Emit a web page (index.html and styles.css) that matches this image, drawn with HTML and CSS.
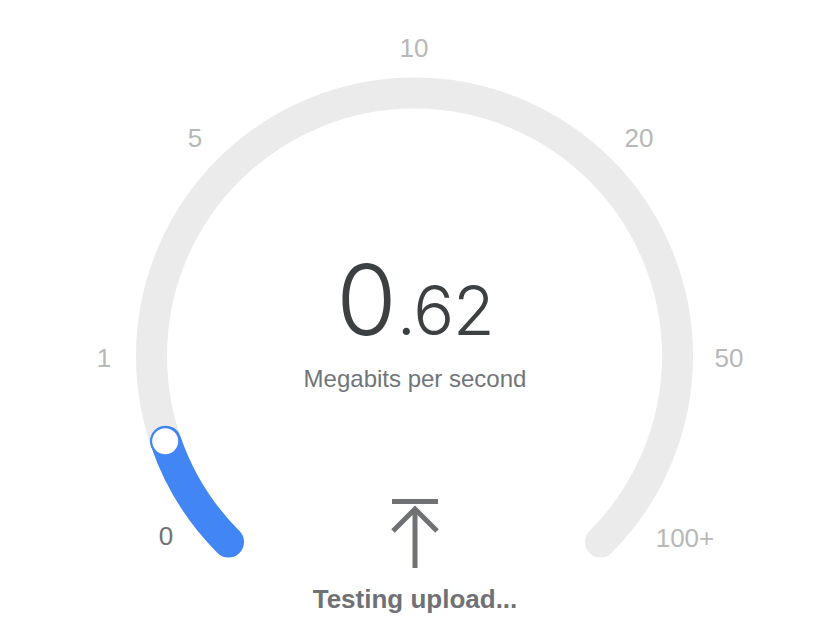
FILE: index.html
```html
<!DOCTYPE html>
<html lang="en">
<head>
    <meta charset="UTF-8">
    <meta name="viewport" content="width=device-width, initial-scale=1.0">
    <title>Speed Test</title>
    <link rel="stylesheet" href="styles.css">
</head>
<body>
    <main class="meter">
        <!-- dial: track, progress, knob and scale labels -->
        <svg class="dial" width="828" height="627" viewBox="0 0 828 627">
            <path class="track" d="M 228.5 542 A 263 263 0 1 1 600.5 542"/>
            <path class="progress" d="M 228.5 542 A 263 263 0 0 1 165.7 441.2"/>
            <circle class="knob" cx="165.2" cy="441.2" r="14"/>
            <text class="tick active" x="166" y="545">0</text>
            <text class="tick" x="104" y="367">1</text>
            <text class="tick" x="195" y="147">5</text>
            <text class="tick" x="414" y="57">10</text>
            <text class="tick" x="639" y="147">20</text>
            <text class="tick" x="729" y="367">50</text>
            <text class="tick" x="685" y="547">100+</text>
        </svg>

        <div class="overlay">
            <div class="speed"><span class="whole">0</span><span class="decimals">.62</span></div>
            <div class="unit">Megabits per second</div>

            <div class="status">
                <svg class="upload-icon" width="50" height="74" viewBox="0 0 50 74">
                    <rect x="2" y="2" width="46" height="5" fill="#6f7175"/>
                    <polyline points="3,34 25,12 47,34" fill="none" stroke="#6f7175" stroke-width="5"/>
                    <line x1="25" y1="13" x2="25" y2="71" stroke="#6f7175" stroke-width="5"/>
                </svg>
                <div class="status-text">Testing upload...</div>
            </div>
        </div>
    </main>
</body>
</html>
```

FILE: styles.css
```css
body {
    margin: 0;
    background-color: white;
    font-family: "Liberation Sans", Arial, sans-serif;
}
.meter {
    display: grid;
    width: 828px;
    height: 627px;
}
.dial,
.overlay {
    grid-area: 1 / 1;
}
.track {
    fill: none;
    stroke: #ebebeb;
    stroke-width: 31;
    stroke-linecap: round;
}
.progress {
    fill: none;
    stroke: #4285f4;
    stroke-width: 31;
    stroke-linecap: round;
}
.knob {
    fill: white;
    stroke: #4285f4;
    stroke-width: 2;
}
.tick {
    font-family: "Liberation Sans", Arial, sans-serif;
    font-size: 26px;
    fill: #b8b8b8;
    text-anchor: middle;
}
.tick.active {
    fill: #6f7175;
}
.overlay {
    display: flex;
    flex-direction: column;
    align-items: center;
    padding-top: 251px;
    padding-left: 2px;
}
.speed {
    font-family: Inter, Roboto, "Liberation Sans", sans-serif;
    font-weight: 300;
    font-size: 98px;
    line-height: 1;
    color: #3c4043;
}
.decimals {
    font-size: 68px;
    letter-spacing: -1px;
}
.unit {
    margin-top: 16px;
    font-size: 24px;
    line-height: 28px;
    color: #70757a;
}
.status {
    display: flex;
    flex-direction: column;
    align-items: center;
    margin-top: 104px;
}
.upload-icon {
    display: block;
}
.status-text {
    margin-top: 13px;
    font-size: 26px;
    font-weight: bold;
    line-height: 30px;
    color: #6f7175;
}
```
